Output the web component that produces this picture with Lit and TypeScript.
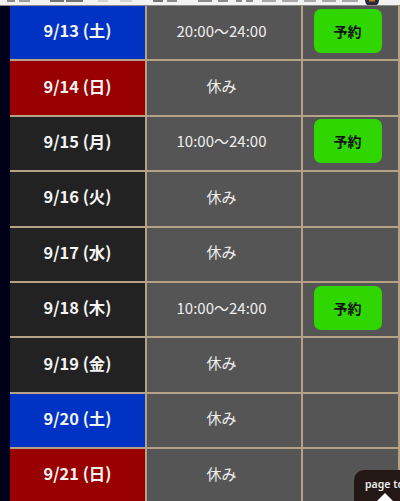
import { LitElement, html, css, svg } from "lit";
import { customElement } from "lit/decorators.js";

interface Row { d: string; k: "sat" | "sun" | "day"; t: string; book: boolean }

const rows: Row[] = [
  { d: "9/13 (土)", k: "sat", t: "20:00〜24:00", book: true },
  { d: "9/14 (日)", k: "sun", t: "休み", book: false },
  { d: "9/15 (月)", k: "day", t: "10:00〜24:00", book: true },
  { d: "9/16 (火)", k: "day", t: "休み", book: false },
  { d: "9/17 (水)", k: "day", t: "休み", book: false },
  { d: "9/18 (木)", k: "day", t: "10:00〜24:00", book: true },
  { d: "9/19 (金)", k: "day", t: "休み", book: false },
  { d: "9/20 (土)", k: "sat", t: "休み", book: false },
  { d: "9/21 (日)", k: "sun", t: "休み", book: false },
];

/* Bottom edges of a text line cropped away by the top of the screenshot: [x, width, opacity] */
const traces: [number, number, number][] = [
  [7, 8, 0.5], [19, 11, 0.4], [50, 14, 0.6], [66, 17, 0.6],
  [98, 10, 0.15], [120, 12, 0.15], [153, 10, 0.6], [167, 10, 0.5],
  [198, 14, 0.5], [218, 10, 0.5], [236, 6, 0.5], [246, 7, 0.5],
  [262, 14, 0.35], [282, 16, 0.35], [304, 12, 0.35], [322, 14, 0.35], [342, 16, 0.35],
];

@customElement("app-root")
export class AppRoot extends LitElement {
  static styles = css`
    :host {
      display: block;
      position: relative;
      width: 400px;
      height: 501px;
      overflow: hidden;
      background: #00001a;
      font-family: "Noto Sans CJK JP", "Noto Sans", sans-serif;
    }
    .top {
      display: block;
      width: 400px;
      height: 6px;
    }
    .table {
      margin-left: 10px;
      width: 390px;
      display: grid;
      grid-template-columns: 137px 156px 97px;
      grid-auto-rows: 55.4px;
      background: #555;
    }
    .row { display: contents; }
    .cell {
      display: flex;
      align-items: center;
      justify-content: center;
      box-sizing: border-box;
      border-bottom: 2px solid #b5a185;
      border-right: 2px solid #b5a185;
    }
    .date {
      color: #f4f4f4;
      font-size: 16.4px;
      font-weight: 700;
      background: #222;
      padding-bottom: 5px;
    }
    .sat { background: #0033c4; }
    .sun { background: #990000; }
    .time, .act {
      background: #555;
      color: #eee;
      font-size: 15px;
      padding-right: 5px;
      padding-bottom: 5px;
    }
    .act { padding-right: 6px; padding-bottom: 4px; }
    .btn {
      width: 68px;
      height: 44px;
      border-radius: 7px;
      background: #2fd600;
      color: #111;
      font-size: 14px;
      font-weight: 700;
      display: flex;
      align-items: center;
      justify-content: center;
    }
    .pagetop {
      position: absolute;
      left: 354px;
      top: 470px;
      width: 60px;
      height: 40px;
      background: #231815;
      border-radius: 10px 0 0 0;
      color: #eee;
      font-family: "Noto Sans", sans-serif;
      font-size: 10.5px;
      font-weight: 600;
      line-height: 14px;
      padding: 7px 0 0 11px;
      box-sizing: border-box;
      white-space: nowrap;
    }
    .arrow {
      position: absolute;
      left: 19px;
      top: 23px;
    }
  `;

  render() {
    return html`
      <svg class="top" viewBox="0 0 400 6" aria-hidden="true">
        <rect width="400" height="6" fill="#f2f2f2" />
        ${traces.map(
          ([x, w, o]) => svg`<rect x=${x} y="0" width=${w} height="2" fill="#222" opacity=${o} />`
        )}
        <circle cx="372" cy="0" r="7" fill="#2a2a38" />
        <rect x="369" y="0" width="6" height="1.5" fill="#c07a28" />
        <rect x="0" y="5" width="400" height="1" fill="#8a8a8a" />
      </svg>
      <div class="table">
        ${rows.map(
          (r) => html`
            <div class="row">
              <div class="cell date ${r.k}">${r.d}</div>
              <div class="cell time">${r.t}</div>
              <div class="cell act">${r.book ? html`<div class="btn">予約</div>` : ""}</div>
            </div>
          `
        )}
      </div>
      <div class="pagetop">
        page top
        <svg class="arrow" width="24" height="12" viewBox="0 0 24 12"><path d="M12 0 L24 12 H0 Z" fill="#fff"/></svg>
      </div>
    `;
  }
}
